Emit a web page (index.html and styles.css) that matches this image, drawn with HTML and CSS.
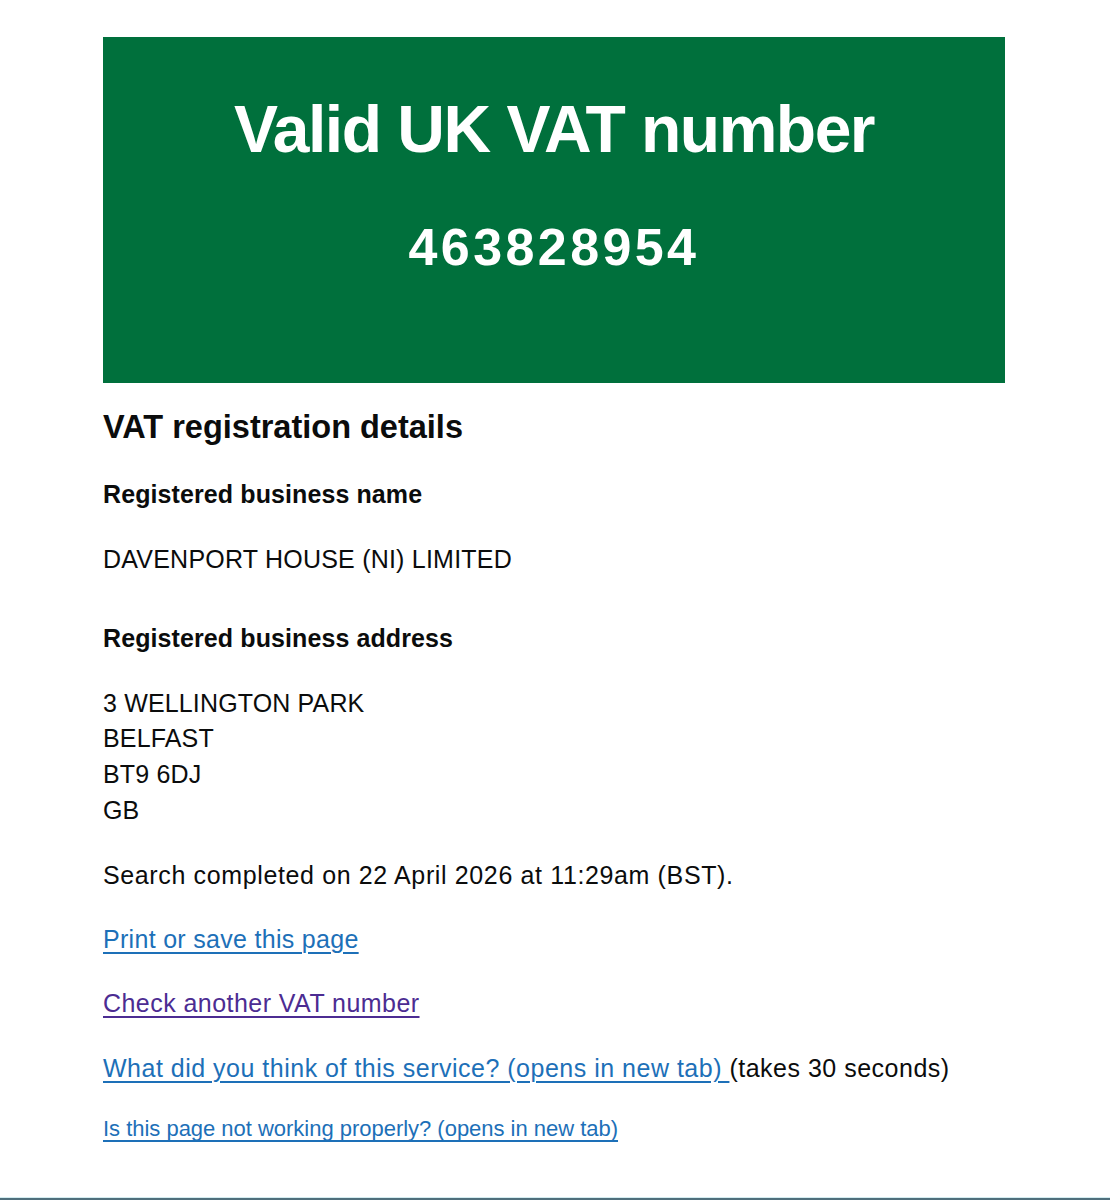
FILE: index.html
```html
<!DOCTYPE html>
<html lang="en">
<head>
<meta charset="utf-8">
<title>Valid UK VAT number</title>
<link rel="stylesheet" href="styles.css">
</head>
<body>
<div class="page">
  <main class="main">
    <div class="panel">
      <h1 class="panel-title">Valid UK VAT number</h1>
      <div class="panel-body">463828954</div>
    </div>
    <h2 class="heading-m">VAT registration details</h2>
    <h3 class="heading-s">Registered business name</h3>
    <p class="body name">DAVENPORT HOUSE (NI) LIMITED</p>
    <h3 class="heading-s addr-heading">Registered business address</h3>
    <p class="body address">3 WELLINGTON PARK<br>BELFAST<br>BT9 6DJ<br>GB</p>
    <p class="body search">Search completed on 22 April 2026 at 11:29am (BST).</p>
    <p class="body print"><a class="link" href="#">Print or save this page</a></p>
    <p class="body check"><a class="link visited" href="#">Check another VAT number</a></p>
    <p class="body feedback"><a class="link" href="#">What did you think of this service? (opens in new tab) </a>(takes 30 seconds)</p>
    <p class="small"><a class="link" href="#">Is this page not working properly? (opens in new tab)</a></p>
  </main>
</div>
<footer class="footer"></footer>
</body>
</html>
```
FILE: styles.css
```css
html, body {
  margin: 0;
  padding: 0;
  background: #ffffff;
}
body {
  font-family: "Liberation Sans", Arial, sans-serif;
  color: #0b0c0c;
}
.page {
  min-height: 1197px;
}
.main {
  width: 902px;
  margin: 0 0 0 103px;
  padding-top: 37px;
}
.panel {
  background: #00703c;
  color: #ffffff;
  text-align: center;
  padding: 56px 20px 0;
  height: 290px;
}
.panel-title {
  margin: 0 0 50px;
  font-size: 66px;
  line-height: 72.6px;
  font-weight: 700;
  letter-spacing: -1.5px;
}
.panel-body {
  font-size: 52px;
  line-height: 62.4px;
  font-weight: 700;
  letter-spacing: 3.4px;
}
.heading-m {
  margin: 24px 0 0;
  font-size: 32.5px;
  line-height: 40px;
  font-weight: 700;
}
.heading-s {
  margin: 29.6px 0 0;
  font-size: 25px;
  line-height: 35.7px;
  font-weight: 700;
  letter-spacing: 0.1px;
}
.body {
  margin: 0;
  font-size: 25px;
  line-height: 35.7px;
  letter-spacing: 0.15px;
}
.name { margin-top: 29.3px; letter-spacing: 0.22px; }
.addr-heading { margin-top: 43.3px; }
.address { margin-top: 29.3px; }
.search { margin-top: 29.2px; letter-spacing: 0.63px; }
.print { margin-top: 28.3px; letter-spacing: 0.3px; }
.check { margin-top: 28.3px; letter-spacing: 0.45px; }
.feedback { margin-top: 29.3px; letter-spacing: 0.5px; }
.small {
  margin: 28px 0 0;
  font-size: 22px;
  line-height: 30px;
  letter-spacing: -0.02px;
}
.link {
  color: #1d70b8;
  text-decoration: underline;
  text-decoration-thickness: 1.5px;
  text-underline-offset: 4px;
}
.link.visited {
  color: #4c2c92;
}
.footer {
  height: 2px;
  border-top: 1px solid #d3ecf0;
  background: #4f6f7c;
}
```
